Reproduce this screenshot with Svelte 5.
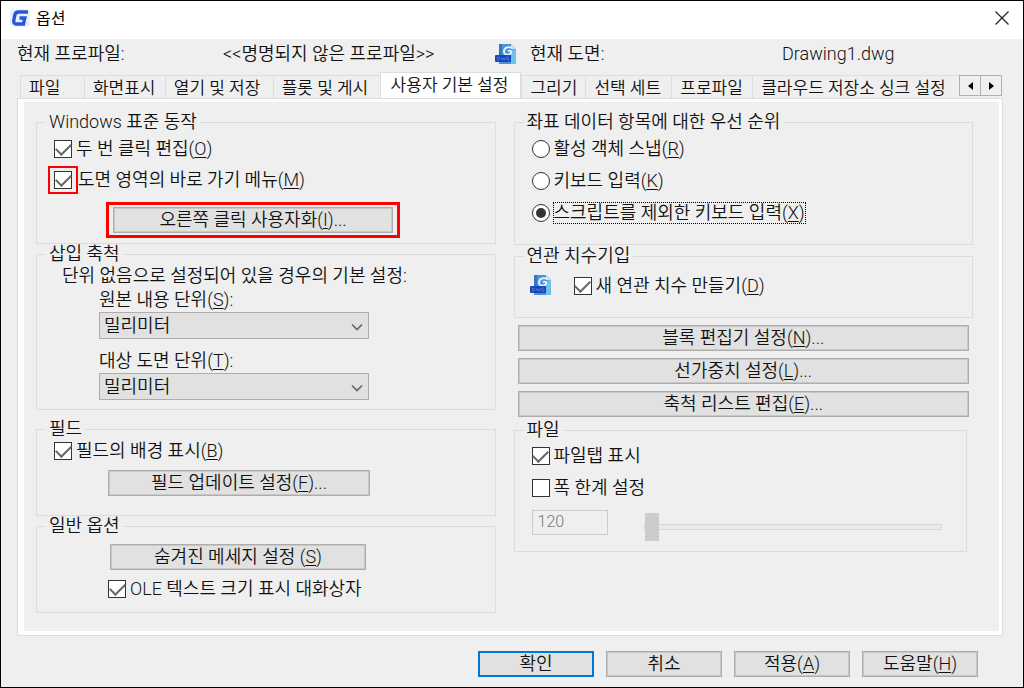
<script>
  const tabs = ['파일', '화면표시', '열기 및 저장', '플롯 및 게시', '사용자 기본 설정', '그리기', '선택 세트', '프로파일', '클라우드 저장소 싱크 설정'];
  const units = ['밀리미터', '센티미터', '미터', '인치'];

  let activeTab = $state(4);
  let sourceUnit = $state('밀리미터');
  let targetUnit = $state('밀리미터');
  let priority = $state('except-script');
  let limitWidth = $state(false);
  let tabWidth = $state(120);
</script>

{#snippet dwgIcon()}
  <svg class="dwg" viewBox="0 0 22 22" aria-hidden="true">
    <path d="M4 1h12l5 5v15H4z" fill="#4a94d8" />
    <path d="M16 7l5-1v15h-5z" fill="#6fc0ea" />
    <path d="M4 1h3v11H4z" fill="#2f78c8" />
    <path d="M16 1l5 5h-5z" fill="#c3e2f6" />
    <path d="M17 5C13 3 9 5 9 8.500S13.500 12.500 15.500 10.500 15 7 13 8" fill="none" stroke="#e8f5ff" stroke-width="1.800" />
    <rect x="0" y="12" width="16" height="7" rx="1" fill="#1446b8" />
    <path d="M2.500 14v3h1.500l1-1.500-1-1.500zM6.500 14l1 3 1-2 1 2 1-3M14 14h-2v3h2v-1.500" fill="none" stroke="#6488dd" stroke-width="0.700" />
  </svg>
{/snippet}

{#snippet chevron()}
  <svg class="chevron" viewBox="0 0 12 8" aria-hidden="true">
    <path d="M1 1.500l5 5 5-5" fill="none" stroke="#666" stroke-width="1.600" />
  </svg>
{/snippet}

<div class="window">
  <header class="titlebar">
    <svg class="logo" viewBox="0 0 20 18" aria-hidden="true">
      <rect width="20" height="18" rx="4" fill="#eaf0fd" />
      <path d="M18 3H8.500Q5.500 3 4.800 6L3.800 11.500Q3.300 15 6.300 15h7.200l1.300-6H9.500" fill="none" stroke="#2657d6" stroke-width="3.400" />
    </svg>
    <h1>옵션</h1>
    <button class="close" aria-label="닫기">
      <svg viewBox="0 0 14 14"><path d="M0.500 0.500l13 13M13.500 0.500l-13 13" stroke="#222" stroke-width="1.200" /></svg>
    </button>
  </header>

  <div class="info">
    <span>현재 프로파일:</span>
    <span class="profile">&lt;&lt;명명되지 않은 프로파일&gt;&gt;</span>
    {@render dwgIcon()}
    <span>현재 도면:</span>
    <span class="drawing">Drawing1.dwg</span>
  </div>

  <main>
    <nav>
      <div class="tabs" role="tablist">
        {#each tabs as tab, i}
          <button class="tab" class:active={i === activeTab} role="tab" aria-selected={i === activeTab} onclick={() => (activeTab = i)}>{tab}</button>
        {/each}
      </div>
      <div class="scroll">
        <button aria-label="이전 탭"><svg viewBox="0 0 5 8"><path d="M5 0v8L0 4z" /></svg></button>
        <button aria-label="다음 탭"><svg viewBox="0 0 5 8"><path d="M0 0v8l5-4z" /></svg></button>
      </div>
    </nav>

    <div class="pane">
      <div class="column">
        <fieldset class="behavior">
          <legend>Windows 표준 동작</legend>
          <label><input type="checkbox" checked />두 번 클릭 편집(<u>O</u>)</label>
          <label><span class="mark-box"><input type="checkbox" checked /></span>도면 영역의 바로 가기 메뉴(<u>M</u>)</label>
          <div class="mark-button"><button class="btn">오른쪽 클릭 사용자화(<u>I</u>)...</button></div>
        </fieldset>

        <fieldset class="scale">
          <legend>삽입 축척</legend>
          <p>단위 없음으로 설정되어 있을 경우의 기본 설정:</p>
          <div class="unit">
            <label for="source">원본 내용 단위(<u>S</u>):</label>
            <div class="select">
              <select id="source" bind:value={sourceUnit}>
                {#each units as unit}<option>{unit}</option>{/each}
              </select>
              {@render chevron()}
            </div>
          </div>
          <div class="unit">
            <label for="target">대상 도면 단위(<u>T</u>):</label>
            <div class="select">
              <select id="target" bind:value={targetUnit}>
                {#each units as unit}<option>{unit}</option>{/each}
              </select>
              {@render chevron()}
            </div>
          </div>
        </fieldset>

        <fieldset class="field">
          <legend>필드</legend>
          <label><input type="checkbox" checked />필드의 배경 표시(<u>B</u>)</label>
          <button class="btn">필드 업데이트 설정(<u>F</u>)...</button>
        </fieldset>

        <fieldset class="general">
          <legend>일반 옵션</legend>
          <button class="btn">숨겨진 메세지 설정 (<u>S</u>)</button>
          <label><input type="checkbox" checked />OLE 텍스트 크기 표시 대화상자</label>
        </fieldset>
      </div>

      <div class="column">
        <fieldset class="priority">
          <legend>좌표 데이터 항목에 대한 우선 순위</legend>
          <label><input type="radio" value="snap" bind:group={priority} />활성 객체 스냅(<u>R</u>)</label>
          <label><input type="radio" value="keyboard" bind:group={priority} />키보드 입력(<u>K</u>)</label>
          <label><input type="radio" value="except-script" bind:group={priority} /><span class="focus">스크립트를 제외한 키보드 입력(<u>X</u>)</span></label>
        </fieldset>

        <fieldset class="dimension">
          <legend>연관 치수기입</legend>
          {@render dwgIcon()}
          <label><input type="checkbox" checked />새 연관 치수 만들기(<u>D</u>)</label>
        </fieldset>

        <div class="stack">
          <button class="btn">블록 편집기 설정(<u>N</u>)...</button>
          <button class="btn">선가중치 설정(<u>L</u>)...</button>
          <button class="btn">축척 리스트 편집(<u>E</u>)...</button>
        </div>

        <fieldset class="file">
          <legend>파일</legend>
          <label><input type="checkbox" checked />파일탭 표시</label>
          <label><input type="checkbox" bind:checked={limitWidth} />폭 한계 설정</label>
          <div class="width">
            <input type="text" aria-label="폭" bind:value={tabWidth} disabled={!limitWidth} />
            <input type="range" aria-label="폭 조절" min="120" max="400" bind:value={tabWidth} disabled={!limitWidth} />
          </div>
        </fieldset>
      </div>
    </div>
  </main>

  <footer>
    <button class="btn primary">확인</button>
    <button class="btn">취소</button>
    <button class="btn">적용(<u>A</u>)</button>
    <button class="btn">도움말(<u>H</u>)</button>
  </footer>
</div>

<style>
  :global(body) {
    margin: 0;
  }

  .window {
    box-sizing: border-box;
    min-height: 100vh;
    border: 1px solid #000;
    background: #efefef;
    color: #111;
    font: 350 18px/20px Roboto, 'Noto Sans CJK KR', sans-serif;
    white-space: nowrap;
  }

  .window * {
    box-sizing: border-box;
  }

  button,
  input,
  select {
    margin: 0;
    padding: 0;
    border: 0;
    border-radius: 0;
    background: none;
    color: inherit;
    font: inherit;
  }

  u {
    text-underline-offset: 2px;
    text-decoration-thickness: 1px;
  }

  .titlebar {
    display: flex;
    align-items: center;
    height: 38px;
    padding: 0 14px 4px 9px;
    background: #fff;
  }

  .logo {
    width: 20px;
    height: 18px;
  }

  h1 {
    flex: 1;
    margin: 2px 0 0 6px;
    color: #000;
    font-size: 16px;
    font-weight: 400;
  }

  .close svg {
    display: block;
    width: 14px;
    height: 14px;
  }

  .info {
    display: grid;
    grid-template-columns: 206px 272px 35px 252px 1fr;
    align-items: center;
    height: 33px;
    padding: 0 16px 3px;
  }

  .dwg {
    width: 22px;
    height: 22px;
  }

  main {
    margin: 0 21px 0 17px;
  }

  nav {
    display: flex;
    align-items: flex-end;
    padding-left: 2px;
  }

  .tabs {
    display: grid;
    flex: 1;
    grid-template-columns: 64fr 81fr 108fr 107fr 142fr 64fr 86fr 81fr 207fr;
    align-items: end;
  }

  .tab {
    height: 24px;
    padding-left: 8px;
    border: solid #ddd;
    border-width: 1px 0 0 1px;
    font-size: 17px;
    text-align: left;
  }

  .tab.active {
    height: 27px;
    padding: 0 0 3px 10px;
    border-right-width: 1px;
    background: #fff;
  }

  .scroll {
    display: flex;
    align-self: center;
  }

  .scroll button {
    display: grid;
    place-items: center;
    width: 22px;
    height: 21px;
    border: 1px solid #b0b0b0;
  }

  .scroll button + button {
    margin-left: -1px;
  }

  .scroll svg {
    width: 5px;
    height: 8px;
  }

  .pane {
    display: grid;
    grid-template-columns: 1fr 1fr;
    gap: 18px;
    padding: 10px 26px 18px 12px;
    border: solid #fff;
    border-width: 3px 3px 4px 6px;
    outline: 1px solid #ddd;
  }

  fieldset {
    display: flow-root;
    min-width: 0;
    margin: 0;
    padding: 0 0 0 17px;
    border: 1px solid #dcdcdc;
  }

  legend {
    margin-left: -8px;
    padding: 0 3px;
  }

  label {
    display: flex;
    align-items: center;
    width: fit-content;
  }

  input[type='checkbox'],
  input[type='radio'] {
    display: grid;
    flex: none;
    place-items: center;
    width: 18px;
    height: 18px;
    margin-right: 4px;
    border: 1px solid #333;
    background: #fff;
    appearance: none;
  }

  input[type='radio'] {
    border-radius: 50%;
  }

  input[type='radio']:checked::before {
    width: 10px;
    height: 10px;
    border-radius: 50%;
    background: #333;
    content: '';
  }

  input[type='checkbox']:checked::before {
    width: 13px;
    height: 7px;
    margin-bottom: 4px;
    border: solid #666;
    border-width: 0 0 2px 2px;
    transform: rotate(-45deg);
    content: '';
  }

  .btn {
    height: 26px;
    border: 1px solid #adadad;
    outline: 1px solid #c8c8c8;
    outline-offset: -2px;
    background: #e1e1e1;
  }

  .behavior {
    padding-bottom: 5px;
  }

  .behavior label {
    margin-top: 7px;
  }

  .behavior label + label {
    margin-top: 11px;
  }

  .mark-box {
    margin: -5px 0 -5px -6px;
    padding: 3px 4px;
    border: 2px solid #f00;
  }

  .mark-box input {
    margin: 0;
  }

  .mark-button {
    display: grid;
    width: 294px;
    margin: 12px 0 0 52px;
    padding: 2px 4px;
    border: 3px solid #f00;
  }

  .scale {
    padding-bottom: 9px;
  }

  p {
    margin: 2px 0 4px 8px;
  }

  .unit {
    width: 270px;
    margin-left: 45px;
  }

  .unit + .unit {
    margin-top: 12px;
  }

  .select {
    position: relative;
    margin-top: 2px;
  }

  select {
    display: block;
    width: 100%;
    height: 27px;
    padding: 0 4px;
    border: 1px solid #adadad;
    background: #e1e1e1;
    appearance: none;
  }

  .chevron {
    position: absolute;
    top: 11px;
    right: 6px;
    width: 12px;
    height: 8px;
    pointer-events: none;
  }

  .field {
    margin-top: 9px;
    padding-bottom: 19px;
  }

  .field label {
    margin-top: 2px;
  }

  .field .btn {
    display: block;
    width: 262px;
    margin: 9px 0 0 54px;
  }

  .general {
    padding-bottom: 13px;
  }

  .general .btn {
    display: block;
    width: 256px;
    margin: 8px 0 9px 56px;
  }

  .general label {
    margin-left: 54px;
  }

  .priority {
    padding-bottom: 21px;
  }

  .priority label {
    margin-top: 7px;
  }

  .priority label + label {
    margin-top: 12px;
  }

  .focus {
    outline: 1px dotted #000;
  }

  .dimension {
    margin-top: 1px;
    padding-bottom: 21px;
  }

  .dimension .dwg {
    float: left;
    margin: 8px 22px 0 -2px;
  }

  .dimension label {
    margin-top: 10px;
  }

  .stack {
    display: grid;
    gap: 7px;
    margin: 7px 4px 3px;
  }

  .file {
    margin-right: 6px;
    padding-bottom: 10px;
  }

  .file label {
    margin-top: 6px;
  }

  .file label + label {
    margin-top: 12px;
  }

  .width {
    display: flex;
    align-items: flex-start;
    gap: 36px;
    margin-top: 12px;
    padding-right: 24px;
  }

  input[type='text'] {
    width: 76px;
    height: 25px;
    padding: 0 5px 2px;
    border: 1px solid #ccc;
    color: #777;
    font-size: 16px;
  }

  input[type='range'] {
    flex: 1;
    min-width: 0;
    height: 28px;
    margin-top: 3px;
    appearance: none;
  }

  input[type='range']::-webkit-slider-runnable-track {
    height: 6px;
    border: 1px solid #d6d9d9;
    background: #e7eaea;
  }

  input[type='range']::-webkit-slider-thumb {
    width: 14px;
    height: 28px;
    margin-top: -12px;
    background: #ccc;
    appearance: none;
  }

  footer {
    display: flex;
    justify-content: flex-end;
    gap: 12px;
    padding: 16px 45px 9px;
  }

  footer .btn {
    width: 116px;
  }

  .primary {
    border: 2px solid #0078d7;
    outline: 0;
  }
</style>
